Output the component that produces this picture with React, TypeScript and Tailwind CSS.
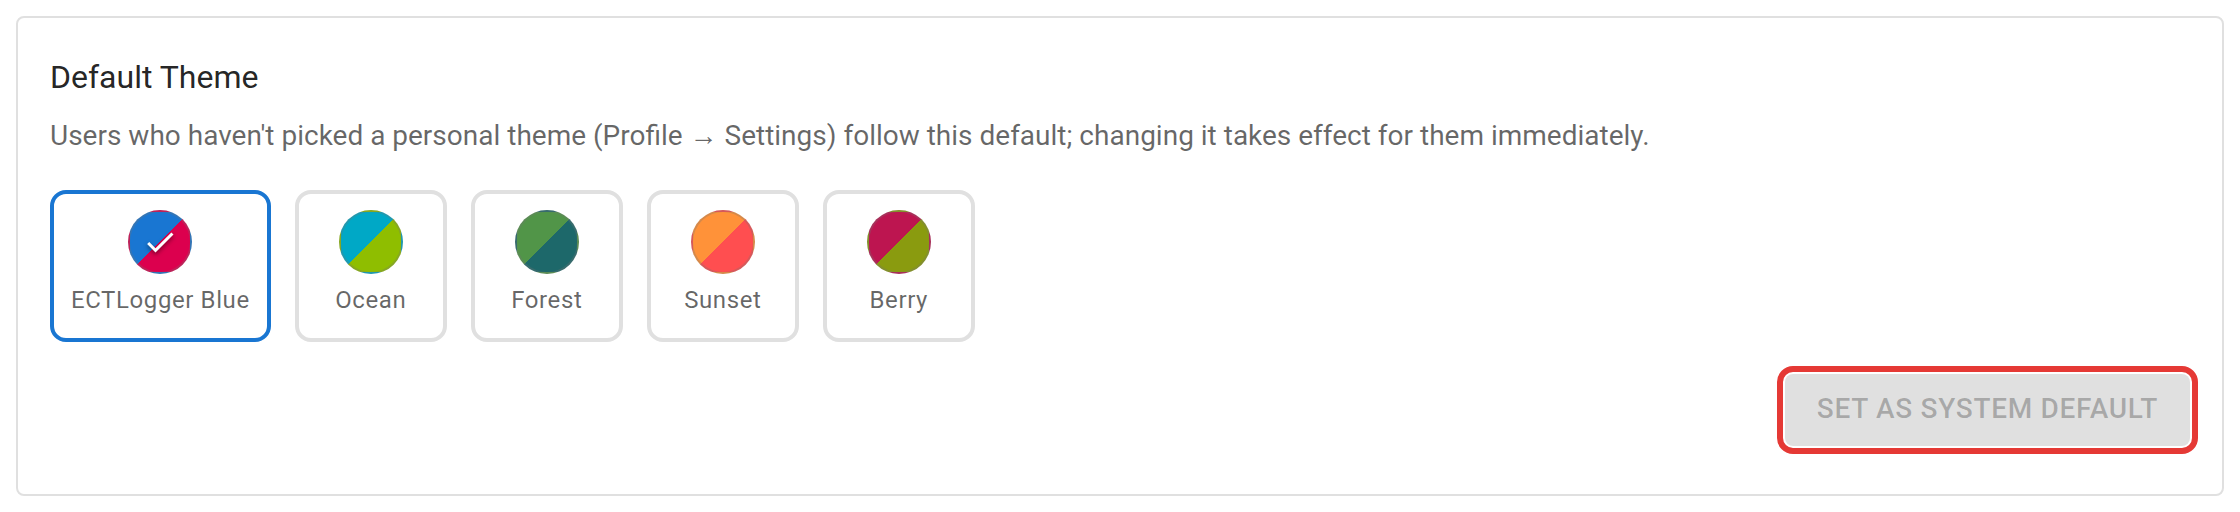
import { useState } from 'react';
import clsx from 'clsx';

interface Theme {
  id: string;
  label: string;
  swatch: string;
}

const THEMES: Theme[] = [
  { id: 'ectlogger', label: 'ECTLogger Blue', swatch: 'bg-[linear-gradient(135deg,#1976d2_50%,#dc004e_50%)]' },
  { id: 'ocean',     label: 'Ocean',          swatch: 'bg-[linear-gradient(135deg,#00a8c6_50%,#8fbe00_50%)]' },
  { id: 'forest',    label: 'Forest',         swatch: 'bg-[linear-gradient(135deg,#519548_50%,#1d686a_50%)]' },
  { id: 'sunset',    label: 'Sunset',         swatch: 'bg-[linear-gradient(135deg,#ff9239_50%,#ff4e50_50%)]' },
  { id: 'berry',     label: 'Berry',          swatch: 'bg-[linear-gradient(135deg,#bd1550_50%,#8a9b0f_50%)]' },
];

const SYSTEM_DEFAULT = 'ectlogger';

function CheckMark() {
  return (
    <svg viewBox="0 0 24 24" aria-hidden="true" className="size-9 fill-white drop-shadow-[0_2px_2px_rgba(0,0,0,0.5)]">
      <path d="M9 16.17 4.83 12l-1.42 1.41L9 19 21 7l-1.41-1.41z" />
    </svg>
  );
}

interface ThemeOptionProps {
  theme: Theme;
  selected: boolean;
  onSelect: () => void;
}

function ThemeOption({ theme, selected, onSelect }: ThemeOptionProps) {
  return (
    <button
      type="button"
      aria-pressed={selected}
      onClick={onSelect}
      className={clsx(
        'flex min-w-[152px] flex-col items-center gap-2 rounded-2xl border-4 px-[17px] pt-4 pb-5',
        selected ? 'border-[#1976d2]' : 'border-[#e0e0e0]',
      )}
    >
      {/* The gradient repeats under the translucent border, which gives the swatch its two-tone rim */}
      <span className={clsx('flex size-16 items-center justify-center rounded-full border-2 border-neutral-500/30', theme.swatch)}>
        {selected && <CheckMark />}
      </span>
      <span className="text-2xl leading-9 tracking-wide text-black/60">{theme.label}</span>
    </button>
  );
}

export default function App() {
  const [selected, setSelected] = useState(SYSTEM_DEFAULT);

  return (
    <main className="bg-white p-4 font-[Roboto,'Liberation_Serif',sans-serif]">
      <section className="rounded-lg border-2 border-[#e0e0e0] px-8 pt-8 pb-12">
        <h2 className="text-[32px] leading-[54px] text-black/87">Default Theme</h2>
        <p className="mt-3 text-[28px] leading-10 text-black/60">
          Users who haven't picked a personal theme (Profile → Settings) follow this default; changing it takes effect for them immediately.
        </p>

        <div className="mt-[34px] flex flex-wrap gap-6">
          {THEMES.map((theme) => (
            <ThemeOption
              key={theme.id}
              theme={theme}
              selected={theme.id === selected}
              onSelect={() => setSelected(theme.id)}
            />
          ))}
        </div>

        {/* Nothing to save until another theme is picked */}
        <div className="mt-8 flex justify-end">
          <button
            type="button"
            disabled={selected === SYSTEM_DEFAULT}
            className="rounded-lg bg-[#1976d2] px-8 pt-[11px] pb-[13px] text-[28px] leading-12 font-medium tracking-wide text-white uppercase outline-6 outline-offset-2 outline-[#e53935] disabled:bg-black/12 disabled:text-black/26"
          >
            Set as system default
          </button>
        </div>
      </section>
    </main>
  );
}
